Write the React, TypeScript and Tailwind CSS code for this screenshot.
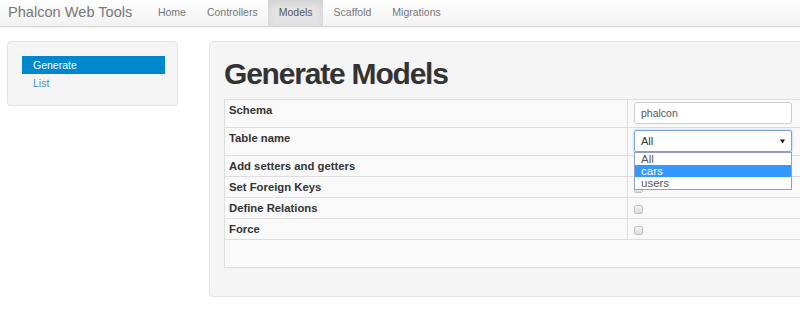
import React from "react";

const font = { fontFamily: '"Liberation Sans", Arial, sans-serif' };

function NavBar() {
  const links = ["Home", "Controllers", "Models", "Scaffold", "Migrations"];
  return (
    <div className="h-[27px] flex items-stretch bg-gradient-to-b from-white to-[#f2f2f2] border-b border-[#d4d4d4] shadow-[0_1px_3px_rgba(0,0,0,0.06)]">
      <div className="ml-[8px] flex items-center text-[14.6px] text-[#777]">Phalcon Web Tools</div>
      <nav className="ml-[15px] flex items-stretch">
        {links.map((l) =>
          l === "Models" ? (
            <div key={l} className="px-[10.5px] flex items-center text-[10.5px] text-[#555] bg-[#e5e5e5] shadow-[inset_0_3px_8px_rgba(0,0,0,0.1)]">
              {l}
            </div>
          ) : (
            <div key={l} className="px-[10.5px] flex items-center text-[10.5px] text-[#777]">
              {l}
            </div>
          )
        )}
      </nav>
    </div>
  );
}

function Sidebar() {
  return (
    <div className="w-[171px] h-[65px] shrink-0 bg-[#f5f5f5] border border-[#e3e3e3] rounded-[4px] pt-[14px] pl-[14px] pr-[12px]">
      <div className="h-[18px] bg-[#0088cc] text-white text-[10.5px] leading-[18px] pl-[11px]">Generate</div>
      <div className="h-[18px] text-[#4a8fd0] text-[10.5px] leading-[18px] pl-[11px]">List</div>
    </div>
  );
}

function Checkbox() {
  return <div className="w-[9px] h-[9px] rounded-[2px] border border-[#c3c3c3] bg-gradient-to-b from-[#f4f4f4] to-[#dcdcdc]" />;
}

function Row({ label, h, children, pt = "pt-[8px]" }: { label: string; h: string; children?: React.ReactNode; pt?: string }) {
  return (
    <div className={`flex border-b border-[#dddddd] bg-[#f9f9f9] ${h}`}>
      <div className="w-[402px] shrink-0 pl-[4px] pt-[3px] text-[11.3px] font-bold text-[#333] leading-[14px]">{label}</div>
      <div className={`flex-1 border-l border-[#dddddd] pl-[6px] ${pt}`}>{children}</div>
    </div>
  );
}

export default function App() {
  return (
    <div className="w-[800px] h-[334px] overflow-hidden bg-white" style={font}>
      <NavBar />
      <div className="flex pt-[14px] pl-[7px]">
        <Sidebar />
        <div className="ml-[31px] w-[640px] h-[256px] shrink-0 bg-[#f5f5f5] border border-[#e3e3e3] rounded-[4px] pt-[12px] pl-[14px]">
          <h1 className="h-[45px] text-[30px] leading-[40px] font-bold tracking-[-1.2px] text-[#333]">Generate Models</h1>
          <div className="w-[620px] border-t border-l border-[#dddddd]">
            <Row label="Schema" h="h-[28px]" pt="pt-[2px]">
              <div className="w-[158px] h-[22px] bg-white border border-[#cccccc] rounded-[3px] pl-[6px] text-[10.5px] leading-[20px] text-[#555]">phalcon</div>
            </Row>
            <Row label="Table name" h="h-[28px]" pt="pt-[2px]">
              <div className="relative w-[158px]">
                <div className="h-[22px] bg-white border border-[#7aa3d6] rounded-[2px] shadow-[0_0_3px_rgba(82,168,236,0.5)] pl-[6px] pr-[6px] flex items-center justify-between text-[11px] text-[#333]">
                  <span>All</span>
                  <svg width="5" height="5" viewBox="0 0 5 5">
                    <path d="M0 0.5 L5 0.5 L2.5 4.5 Z" fill="#111" />
                  </svg>
                </div>
                <div className="absolute left-0 top-[22px] z-10 w-[158px] bg-white border border-[#8ea3c3] text-[11.5px] leading-[12px]">
                  <div className="pl-[6px] text-[#555]">All</div>
                  <div className="pl-[6px] bg-[#3399ff] text-white">cars</div>
                  <div className="pl-[6px] text-[#555]">users</div>
                </div>
              </div>
            </Row>
            <Row label="Add setters and getters" h="h-[21px]" pt="pt-[7px]">
              <Checkbox />
            </Row>
            <Row label="Set Foreign Keys" h="h-[21px]" pt="pt-[7px]">
              <Checkbox />
            </Row>
            <Row label="Define Relations" h="h-[21px]" pt="pt-[7px]">
              <Checkbox />
            </Row>
            <Row label="Force" h="h-[21px]" pt="pt-[7px]">
              <Checkbox />
            </Row>
            <div className="h-[28px] border-b border-[#dddddd] bg-[#f9f9f9]" />
          </div>
        </div>
      </div>
    </div>
  );
}
